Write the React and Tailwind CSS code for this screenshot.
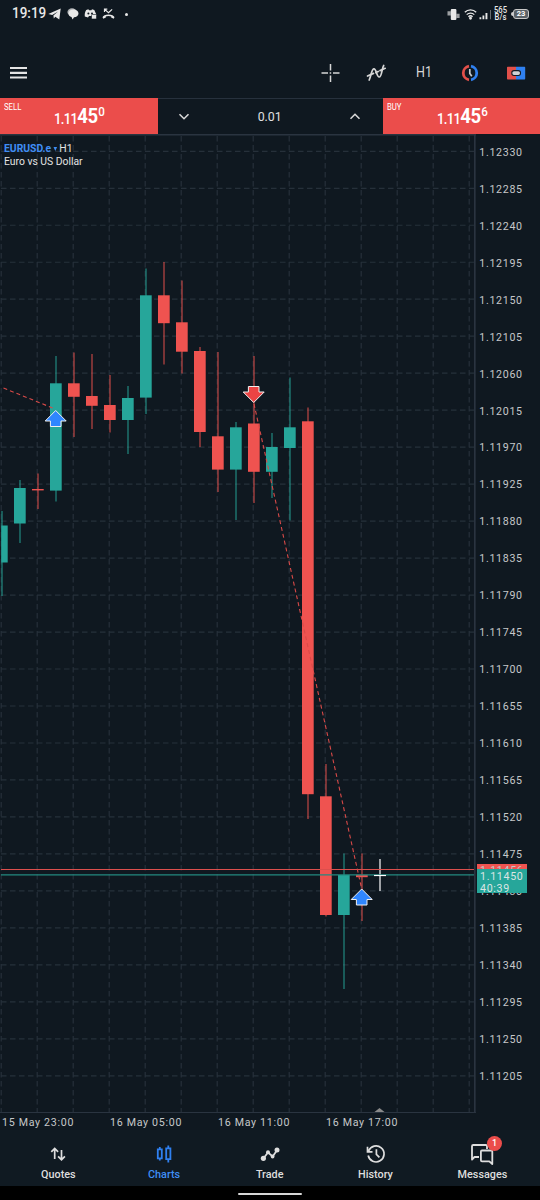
const RED = '#ef5350'
const GREEN = '#26a69a'

// x, high, body top, body bottom, low, color
const candles = [
    [2, 511, 525.5, 562.5, 596, GREEN],
    [20, 480, 488, 523.5, 543, GREEN],
    [38, 473.5, 489, 490.4, 509, RED],
    [56, 356, 383.3, 490.6, 501.5, GREEN],
    [74, 352.5, 383.3, 396.8, 437, RED],
    [92, 354, 396, 405.8, 429, RED],
    [110, 375, 405, 420, 432.5, RED],
    [128, 386, 398, 420, 454, GREEN],
    [146, 268.5, 295.3, 397.6, 414, GREEN],
    [164, 262, 295.3, 323.2, 364.5, RED],
    [182, 280.5, 322.3, 351.7, 373.5, RED],
    [200, 347, 351, 432, 447, RED],
    [218, 352, 436.3, 469.6, 492, RED],
    [236, 422, 427.3, 469.6, 520, GREEN],
    [254, 356, 423.5, 471.8, 503, RED],
    [272, 433, 447, 471.8, 498, GREEN],
    [290, 377.5, 427.3, 448, 520.5, GREEN],
    [308, 407.5, 421.3, 794.2, 819, RED],
    [326, 764, 796.3, 915, 916.5, RED],
    [344, 853.5, 875, 915, 989, GREEN],
    [362, 853.5, 874.8, 877.2, 921, RED],
    [380, 859, 875, 876, 891, '#ffffff'],
]

const prices = Array.from({ length: 26 }, (_, i) => ((112330 - i * 45) / 100000).toFixed(5))
const columns = Array.from({ length: 14 }, (_, i) => 1.2 + i * 36)
const dates = ['15 May 23:00', '16 May 05:00', '16 May 11:00', '16 May 17:00']

function StatusBar() {
    return (
        <div className="flex h-[28px] items-center justify-between pl-[11.5px] pr-[11px] text-[#e8e8e8]">
            <div className="flex items-center">
                <span className="w-[36px] origin-left scale-x-[0.93] text-[14.5px] font-medium leading-none">19:19</span>
                <svg className="h-[12px] w-[13px]" viewBox="0 0 13 12" fill="currentColor">
                    <path d="M.3 6 12.7.4 11.3 11.4 7.3 8.8 5.8 10.5 5.4 7.6 10 3.5 4.2 6.9z" />
                </svg>
                <svg className="ml-[6px] h-[12px] w-[12px]" viewBox="0 0 12 12" fill="currentColor">
                    <ellipse cx="5" cy="4" rx="4.6" ry="3.7" opacity=".75" />
                    <path d="M6.3 1.6c3 0 5.2 1.6 5.2 4S9.300 9.200 7 9.300L5.600 11.500 4.500 9C2.600 8.400 1.500 7.200 1.500 5.500c0-2.400 2.200-3.900 4.800-3.900z" />
                </svg>
                <svg className="ml-[5px] h-[12px] w-[13px]" viewBox="0 0 13 12">
                    <path d="M2.200 2 4.400 1.200l.6 1h2.400l.6-1L10.300 2l1.800 4v2.500H8.500L8 8H5l-1 1.600L.8 8.400C.5 6 1 4 2.200 2z" fill="currentColor" />
                    <circle cx="4.400" cy="5.500" r="1" fill="#0f1820" />
                    <circle cx="8" cy="5.500" r="1" fill="#0f1820" />
                    <rect x="7.500" y="6.500" width="5" height="4.500" rx=".8" fill="currentColor" stroke="#0f1820" strokeWidth=".6" />
                </svg>
                <svg className="ml-[5px] h-[12px] w-[13px]" viewBox="0 0 13 12" fill="none" stroke="currentColor">
                    <path d="M2.500 4V1.200h2.800M2.700 1.400l3.800 3.400 3.600-3.400" strokeWidth="1.200" />
                    <path d="M1.500 9.500c.8-3 9.200-3 10 0" strokeWidth="1.300" />
                    <path d="M.9 9.800 3.700 8.400M12.100 9.800 9.300 8.400" strokeWidth="2" />
                </svg>
                <span className="ml-[10px] size-[3px] rounded-full bg-[#e8e8e8]" />
            </div>
            <div className="flex items-center">
                <svg className="h-[13px] w-[13px]" viewBox="0 0 13 13" fill="currentColor">
                    <rect x="3.800" y="1" width="5.600" height="11" rx="1" />
                    <path d="M.5 3.200h3.300v4.300H.5zM9.400 5.800h3.200v4.200H9.400z" opacity=".65" />
                </svg>
                <svg className="ml-[4px] h-[12px] w-[13px]" viewBox="0 0 13 12" fill="none" stroke="currentColor" strokeWidth="1.300">
                    <path d="M.8 4.300a8 8 0 0 1 11.400 0M2.700 6.600a5.500 5.500 0 0 1 7.600 0M4.400 8.700a3.200 3.200 0 0 1 4.200 0" />
                    <circle cx="6.500" cy="10.300" r=".8" fill="currentColor" />
                </svg>
                <svg className="ml-[2px] h-[12px] w-[13px]" viewBox="0 0 13 12" fill="currentColor">
                    <path d="M.5 9.200h1.800v2H.5zM3.500 7.500h1.800v3.700H3.500zM6.500 5h1.900v6.200H6.500z" />
                    <path d="M11 2h1v9.200h-1z" opacity=".4" />
                </svg>
                <span className="ml-[1px] w-[15px] scale-x-[0.9] text-center text-[8.5px] font-medium leading-[7.4px]">
                    565
                    <br />
                    B/s
                </span>
                <span className="ml-[3px] h-[4px] w-[2px] rounded-l-sm bg-[#d0d0d0]" />
                <span className="flex h-[10px] w-[16px] items-center justify-center rounded-[3px] border border-[#c8c8c8] bg-[#5b6268] text-[7.5px] font-bold leading-none text-white">
                    23
                </span>
            </div>
        </div>
    )
}

function Toolbar() {
    return (
        <div className="flex h-[70px] items-center justify-between pb-[20px] pl-[10px] pr-[14px] pt-[20px]">
            <svg className="mt-[20px] h-[12px] w-[17px]" viewBox="0 0 17 12" fill="#e4e4e4">
                <path d="M0 0h17v2.100H0zM0 4.800h17v2.100H0zM0 9.500h17v2.100H0z" />
            </svg>
            <div className="mt-[20px] flex items-center">
                <svg className="h-[20px] w-[20px]" viewBox="0 0 20 20" stroke="#d6d6d6" strokeWidth="1.500">
                    <path d="M10.500 1v6.500M10.500 12.500V19M1.500 10h6.500M13 10h6.500M9.700 10h1.500" />
                </svg>
                <svg className="ml-[26px] h-[20px] w-[21px]" viewBox="0 0 21 20" fill="none" stroke="#d6d6d6" strokeLinecap="round" strokeLinejoin="round">
                    <path d="M3.200 17C5.500 12 5.500 5.800 8 5.800S10.500 14 13.200 14 15.700 5.500 17.700 2.500" strokeWidth="1.700" />
                    <path d="M1.500 13 7.500 10.400M9.800 9.600l2.400-1.100M14 7.600l5.200-2.300" strokeWidth="1.700" />
                </svg>
                <span className="ml-[29px] w-[16px] origin-left scale-x-[0.86] text-[14.5px] leading-none text-[#d6d6d6]">H1</span>
                <svg className="ml-[28px] h-[20px] w-[20px]" viewBox="0 0 20 20" fill="none">
                    <path d="M9 3.200a6.900 6.900 0 0 0 0 13.600" stroke="#e2504a" strokeWidth="2.800" />
                    <path d="M11 3.200a6.900 6.900 0 0 1 0 13.600" stroke="#2f80f0" strokeWidth="2.800" />
                    <path d="M9.800 6v4.500l2 2.700" stroke="#c9cdd1" strokeWidth="1.700" />
                </svg>
                <svg className="ml-[26px] h-[20px] w-[20px]" viewBox="0 0 20 20">
                    <path d="M1.700 3.700H10v12.700H1.700a.7.700 0 0 1-.7-.7V4.400a.7.700 0 0 1 .7-.7z" fill="#e2504a" />
                    <path d="M10 3.700h8.500a.7.700 0 0 1 .7.700v11.300a.7.700 0 0 1-.7.700H10z" fill="#2f80f0" />
                    <rect x="5.800" y="7.600" width="8.700" height="4.900" rx="2.200" fill="#cfd3d7" stroke="#141c26" strokeWidth="1.100" />
                </svg>
            </div>
        </div>
    )
}

function Quote({ side, last }) {
    return (
        <div className="h-full w-[157.500px] bg-[#eb4d4b] text-white">
            <div className="flex pl-[4px] pt-[4px]">
                <span className="w-[20px] origin-left scale-x-[0.86] text-[9px] leading-[10px]">{side}</span>
                <div className="ml-[30px] flex origin-left scale-x-[0.93] items-end pt-[4px] font-medium leading-none">
                    <span className="pb-[0.500px] text-[14px] leading-[14px] tracking-[-0.7px]">1.11</span>
                    <span className="text-[20px] font-bold leading-[19px] tracking-[-0.4px]">45</span>
                    <span className="ml-[0.500px] pb-[8px] text-[12.5px] leading-[12px]">{last}</span>
                </div>
            </div>
        </div>
    )
}

function Chevron({ d }) {
    return (
        <svg className="h-[8px] w-[12px]" viewBox="0 0 12 8" fill="none" stroke="#d8d8d8" strokeWidth="1.600">
            <path d={d} />
        </svg>
    )
}

function TradeBar() {
    return (
        <div className="flex h-[36px]">
            <Quote side="SELL" last="0" />
            <div className="flex flex-1 items-center justify-between border-t border-[#27313d] pl-[20.5px] pr-[21px]">
                <Chevron d="M1.500 1.300 6 5.700 10.500 1.300" />
                <span className="scale-x-[0.95] text-[13px] leading-none text-[#e0e0e0]">0.01</span>
                <Chevron d="M1.500 5.700 6 1.300 10.500 5.700" />
            </div>
            <Quote side="BUY" last="6" />
        </div>
    )
}

function Candle({ x, high, top, bottom, low, color }) {
    const left = Math.max(x - 6, 1.3)
    return (
        <g>
            <rect x={x - 0.7} y={high} width="1.400" height={low - high} fill={color} opacity={color === '#ffffff' ? 0.85 : 0.68} />
            <rect x={left} y={top} width={x + 5.7 - left} height={bottom - top} fill={color} />
        </g>
    )
}

function Arrow({ x, y, down }) {
    return (
        <path
            d="M0 0 10.500 10.500H5.300V16H-5.300V10.500H-10.500z"
            transform={`translate(${x} ${y})${down ? ' scale(1 -1)' : ''}`}
            fill={down ? '#eb4444' : '#2f86ff'}
            stroke="#f0f0f0"
            strokeWidth="1"
        />
    )
}

function Chart() {
    return (
        <svg className="h-[979px] w-[476px] shrink-0" viewBox="0 134 476 979">
            <g stroke="#26303a" strokeWidth="1.200" strokeDasharray="5.500 3.500">
                {columns.map((x) => (
                    <line key={x} x1={x} x2={x} y1="136" y2="1112" />
                ))}
                {prices.map((p, i) => (
                    <line key={p} x1="1" x2="474" y1={151.3 + i * 36.98} y2={151.3 + i * 36.98} />
                ))}
            </g>
            {candles.map(([x, high, top, bottom, low, color]) => (
                <Candle key={x} x={x} high={high} top={top} bottom={bottom} low={low} color={color} />
            ))}
            <path d="M1 869.500H474" stroke="#dc4f4d" strokeWidth="1" />
            <path d="M1 874.800H474" stroke="#23897f" strokeWidth="1.300" />
            <path d="M374 875.500h12" stroke="#fff" strokeWidth="1.200" />
            <path d="M3.500 388 55 409M254 404 361.500 888" stroke="#d94a48" strokeWidth="1.100" strokeDasharray="4 3" fill="none" />
            <Arrow x={55.7} y={410.5} />
            <Arrow x={253.7} y={402.5} down />
            <Arrow x={361.7} y={889} />
            <path d="M374.500 1112 379.500 1108 384.500 1112z" fill="#8a8a8a" />
            <path d="M0 134.600H476M0 1112.800H476" stroke="#2a3440" strokeWidth="1.700" />
            <path d="M474.800 134V1113" stroke="#2a3440" strokeWidth="1.700" />
        </svg>
    )
}

function PriceAxis() {
    return (
        <div className="relative flex-1 text-[11.5px] tracking-[0.75px] text-[#c6c8ca]">
            <div className="-mt-[1px] border-t-[1px] border-transparent">
                {prices.map((p) => (
                    <div key={p} className="flex h-[36.980px] origin-left scale-x-[0.925] items-center pl-[3.5px] leading-none">
                        {p}
                    </div>
                ))}
            </div>
            <div className="absolute left-[1px] top-[730px] h-[12px] w-[50px] overflow-hidden bg-[#ef5350] pl-[3px] leading-[12px]">
                <div className="origin-left scale-x-[0.925]">1.11456</div>
            </div>
            <div className="absolute left-[1px] top-[735px] h-[24px] w-[50px] bg-[#26a69a] pl-[3px] pt-[1px] leading-[12px] text-[#dbe5e4]">
                <div className="origin-left scale-x-[0.925]">1.11450</div>
                <div className="origin-left scale-x-[0.925]">40:39</div>
            </div>
        </div>
    )
}

function Tab({ label, active, children }) {
    return (
        <div className={`flex flex-col items-center ${active ? 'text-[#3f8ef5]' : 'text-[#dedede]'}`}>
            <div className="relative flex h-[24px] items-center">{children}</div>
            <span className="mt-[2px] scale-x-[0.94] text-[11.5px] font-medium leading-[12px]">{label}</span>
        </div>
    )
}

function BottomNav() {
    return (
        <div className="grid grid-cols-5 px-[5px] pt-[12px]">
            <Tab label="Quotes">
                <svg className="h-[16px] w-[16px]" viewBox="0 0 16 16" fill="none" stroke="currentColor" strokeWidth="1.700">
                    <path d="M4.700 13V2.500M1.300 5.800 4.700 2.400 8.100 5.800M11.500 4V13.700M8.100 10.400 11.500 13.800 14.900 10.400" />
                </svg>
            </Tab>
            <Tab label="Charts" active>
                <svg className="h-[18px] w-[16px]" viewBox="0 0 16 18" fill="none" stroke="#2f80f0" strokeWidth="1.800">
                    <path d="M1.800 4.300h4v9h-4zM3.800 2v2.300M3.800 13.300v2.200M10.200 3.300h4.200v10.900h-4.200zM12.300.5v2.800M12.300 14.200v3.300" />
                </svg>
            </Tab>
            <Tab label="Trade">
                <svg className="h-[18px] w-[20px]" viewBox="0 0 20 18" fill="currentColor">
                    <path d="M3.500 13.200 8 7.500l4.700 4L17 5.300" fill="none" stroke="currentColor" strokeWidth="1.800" />
                    <circle cx="3.400" cy="13.300" r="2.600" />
                    <circle cx="8" cy="7.300" r="2" />
                    <circle cx="12.600" cy="11.500" r="1.900" />
                    <circle cx="17" cy="5" r="2.500" />
                </svg>
            </Tab>
            <Tab label="History">
                <svg className="h-[20px] w-[20px]" viewBox="0 0 20 20" fill="none" stroke="currentColor" strokeWidth="1.700">
                    <path d="M2.600 7a8 8 0 1 1-.4 4.500M1.500 2.800v5h5M10.400 5.300v5l3 3" />
                </svg>
            </Tab>
            <Tab label="Messages">
                <svg className="h-[22px] w-[24px]" viewBox="0 0 24 22" fill="none" stroke="currentColor" strokeWidth="1.800" strokeLinejoin="round">
                    <path d="M9 14H4.500L2 16.500V3.200Q2 2 3.200 2H15.800Q17 2 17 3.200V6" />
                    <path d="M12 7.500H21.200Q22.300 7.500 22.300 8.600V21L19.300 18.300H12Q10.900 18.300 10.900 17.200V8.600Q10.900 7.500 12 7.500z" />
                </svg>
                <span className="absolute -top-[6px] left-[17px] flex size-[15px] items-center justify-center rounded-full bg-[#eb4d4b] text-[9px] font-medium text-white">
                    1
                </span>
            </Tab>
        </div>
    )
}

export default function App() {
    return (
        <div className="flex h-[1200px] w-[540px] flex-col overflow-hidden bg-[#0f1820] font-['Roboto',sans-serif]">
            <StatusBar />
            <Toolbar />
            <TradeBar />
            <div className="relative flex h-[979px]">
                <Chart />
                <PriceAxis />
                <div className="absolute left-[4px] top-[8px] origin-left scale-x-[0.9] text-[11.5px] leading-[13px] text-[#e4e4e4]">
                    <div className="flex items-center">
                        <span className="font-bold text-[#3f8ef5]">EURUSD.e</span>
                        <span className="ml-[3px] mr-[2px] border-x-[2.500px] border-t-[4px] border-x-transparent border-t-[#3f8ef5]" />
                        <span>H1</span>
                    </div>
                    <div>Euro vs US Dollar</div>
                </div>
            </div>
            <div className="flex h-[17px] pl-[2px] pt-[3px]">
                {dates.map((d) => (
                    <span key={d} className="w-[108px] origin-left scale-x-[0.925] whitespace-nowrap text-[11.5px] leading-[13px] tracking-[0.75px] text-[#c6c8ca]">
                        {d}
                    </span>
                ))}
            </div>
            <div className="h-[56px] bg-[#101a22]">
                <BottomNav />
            </div>
            <div className="flex h-[14px] justify-center bg-black pt-[7px]">
                <div className="h-[2px] w-[64px] rounded-full bg-[#d8d8d8]" />
            </div>
        </div>
    )
}
